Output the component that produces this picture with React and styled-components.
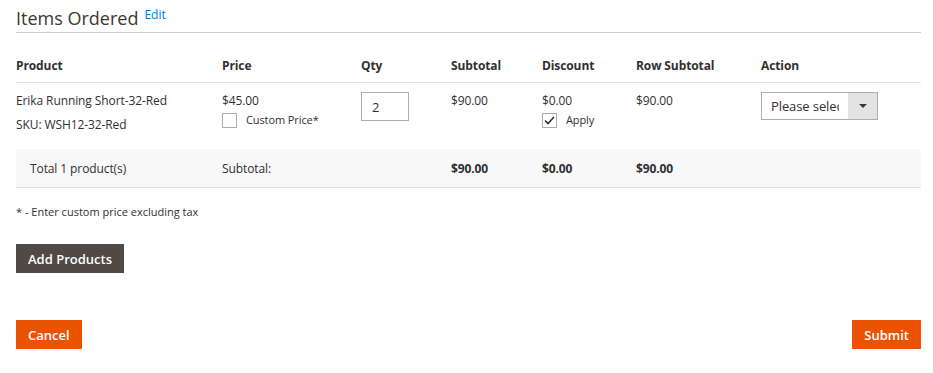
import styled, { createGlobalStyle } from 'styled-components';

const Global = createGlobalStyle`
  body {
    margin: 0;
    background: #fff;
    font-family: "Open Sans", "Liberation Sans", sans-serif;
    color: #303030;
  }
`;

const Page = styled.div`
  padding: 0 12px 0 16px;
`;

const TitleBar = styled.div`
  display: flex;
  align-items: flex-start;
  gap: 6px;
  height: 33px;
  border-bottom: 1px solid #cccccc;
  box-sizing: border-box;
  padding-top: 6px;
`;

const Title = styled.h2`
  margin: 0;
  font-size: 18px;
  font-weight: 400;
  color: #41362f;
  line-height: 24px;
`;

const EditLink = styled.a`
  font-size: 12px;
  color: #007bdb;
  text-decoration: none;
  line-height: 16px;
  margin-top: 1px;
`;

const Grid = styled.table`
  width: 100%;
  border-collapse: collapse;
  margin-top: 16px;
  font-size: 12px;
  letter-spacing: -0.1px;
  table-layout: fixed;
`;

const Th = styled.th`
  text-align: left;
  font-weight: 700;
  color: #303030;
  height: 33px;
  padding: 0;
  border-bottom: 1px solid #e3e3e3;
  vertical-align: middle;
`;

const Td = styled.td`
  padding: 9px 0 0 0;
  vertical-align: top;
  line-height: 18px;
  height: 57px;
`;

const TotalRow = styled.tr`
  background: #f8f8f8;
  border-bottom: 1px solid #e3e3e3;
`;

const TotalCell = styled.td`
  height: 38px;
  padding: 0 0 0 ${p => p.$indent || '0'};
  font-weight: ${p => (p.$bold ? 700 : 400)};
  vertical-align: middle;
`;

const Line = styled.div`
  margin-bottom: ${p => p.$mb || '0'};
`;

const CheckRow = styled.label`
  display: flex;
  align-items: center;
  gap: 9px;
  font-size: 11px;
  margin-top: 1px;
`;

const Box = styled.span`
  width: 15px;
  height: 15px;
  box-sizing: border-box;
  border: 1px solid #adadad;
  background: #fff;
  display: inline-flex;
  align-items: center;
  justify-content: center;
`;

const QtyInput = styled.div`
  width: 48px;
  height: 29px;
  box-sizing: border-box;
  border: 1px solid #adadad;
  font-size: 13px;
  padding: 0 10px;
  display: flex;
  align-items: center;
`;

const Select = styled.div`
  width: 117px;
  height: 28px;
  box-sizing: border-box;
  border: 1px solid #adadad;
  display: flex;
  font-size: 13px;
`;

const SelectText = styled.span`
  flex: 1;
  overflow: hidden;
  white-space: nowrap;
  margin: 0 9px 0 9px;
  line-height: 26px;
`;

const SelectArrow = styled.span`
  width: 29px;
  background: #e3e3e3;
  display: flex;
  align-items: center;
  justify-content: center;
  &::after {
    content: '';
    border-left: 4px solid transparent;
    border-right: 4px solid transparent;
    border-top: 4px solid #41362f;
  }
`;

const Note = styled.p`
  margin: 17px 0 0;
  font-size: 11px;
  line-height: 14px;
`;

const Button = styled.button`
  font-family: inherit;
  font-size: 13px;
  font-weight: 600;
  color: #fff;
  border: none;
  height: 29px;
  padding: 0 12px;
  background: ${p => (p.$primary ? '#eb5202' : '#514943')};
  cursor: pointer;
`;

const AddRow = styled.div`
  margin-top: 25px;
`;

const Actions = styled.div`
  display: flex;
  justify-content: space-between;
  margin-top: 47px;
`;

const cols = [206, 139, 90, 91, 94, 125, 160];

export default function App() {
  return (
    <>
      <Global />
      <Page>
        <TitleBar>
          <Title>Items Ordered</Title>
          <EditLink href="#">Edit</EditLink>
        </TitleBar>
        <Grid>
          <colgroup>
            {cols.map((w, i) => (
              <col key={i} style={{ width: w }} />
            ))}
          </colgroup>
          <thead>
            <tr>
              <Th>Product</Th>
              <Th>Price</Th>
              <Th>Qty</Th>
              <Th>Subtotal</Th>
              <Th>Discount</Th>
              <Th>Row Subtotal</Th>
              <Th>Action</Th>
            </tr>
          </thead>
          <tbody>
            <tr>
              <Td>
                <Line $mb="6px">Erika Running Short-32-Red</Line>
                <Line>SKU: WSH12-32-Red</Line>
              </Td>
              <Td>
                <Line>$45.00</Line>
                <CheckRow>
                  <Box />
                  Custom Price*
                </CheckRow>
              </Td>
              <Td>
                <QtyInput>2</QtyInput>
              </Td>
              <Td>$90.00</Td>
              <Td>
                <Line>$0.00</Line>
                <CheckRow>
                  <Box>
                    <svg width="11" height="9" viewBox="0 0 11 9">
                      <path d="M1 4.5 L4 7.5 L10 1" fill="none" stroke="#303030" strokeWidth="1.6" />
                    </svg>
                  </Box>
                  Apply
                </CheckRow>
              </Td>
              <Td>$90.00</Td>
              <Td>
                <Select>
                  <SelectText>Please select</SelectText>
                  <SelectArrow />
                </Select>
              </Td>
            </tr>
            <TotalRow>
              <TotalCell $indent="14px">Total 1 product(s)</TotalCell>
              <TotalCell>Subtotal:</TotalCell>
              <TotalCell />
              <TotalCell $bold>$90.00</TotalCell>
              <TotalCell $bold>$0.00</TotalCell>
              <TotalCell $bold>$90.00</TotalCell>
              <TotalCell />
            </TotalRow>
          </tbody>
        </Grid>
        <Note>* - Enter custom price excluding tax</Note>
        <AddRow>
          <Button>Add Products</Button>
        </AddRow>
        <Actions>
          <Button $primary>Cancel</Button>
          <Button $primary>Submit</Button>
        </Actions>
      </Page>
    </>
  );
}
